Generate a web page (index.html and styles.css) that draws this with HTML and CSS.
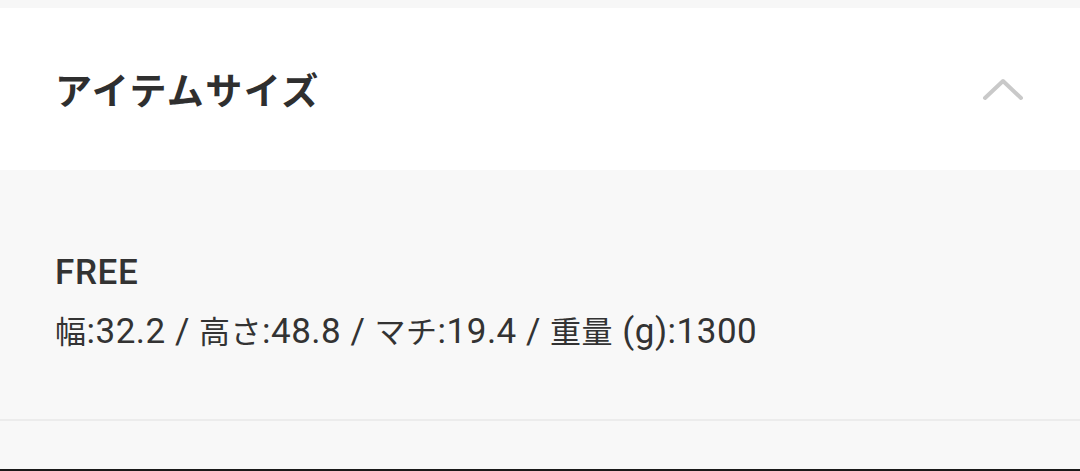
FILE: index.html
```html
<!DOCTYPE html>
<html lang="ja">
<head>
<meta charset="utf-8">
<link rel="stylesheet" href="styles.css">
</head>
<body>
<div class="top-strip"></div>
<section class="accordion">
  <header class="acc-head">
    <h2 class="acc-title">アイテムサイズ</h2>
    <svg class="chevron" width="42" height="24" viewBox="0 0 42 24">
      <polyline points="3,21 21,4 39,21" fill="none" stroke="#c9c9c9" stroke-width="4" stroke-linecap="round" stroke-linejoin="round"/>
    </svg>
  </header>
  <div class="acc-body">
    <div class="size-name">FREE</div>
    <div class="size-detail"><span class="ja">幅</span>:32.2 / <span class="ja">高さ</span>:48.8 / <span class="ja">マチ</span>:19.4 / <span class="ja">重量</span> (g):1300</div>
  </div>
  <div class="acc-after"></div>
  <div class="bottom-bar"></div>
</section>
</body>
</html>
```

FILE: styles.css
```css
html, body {
  margin: 0;
  padding: 0;
  background: #f8f8f8;
}
body {
  width: 1080px;
  height: 471px;
  overflow: hidden;
  font-family: Roboto, "Noto Sans CJK JP", sans-serif;
  color: #333333;
}
.top-strip {
  height: 8px;
  background: #f7f7f7;
}
.acc-head {
  height: 162px;
  background: #ffffff;
  display: flex;
  align-items: center;
  justify-content: space-between;
  padding: 0 55px 0 55px;
  box-sizing: border-box;
}
.acc-title {
  margin: 0;
  font-family: "Noto Sans CJK JP", sans-serif;
  font-size: 37px;
  font-weight: 700;
  color: #2f2f2f;
  letter-spacing: 1.5px;
}
.chevron {
  display: block;
  margin-right: 1px;
}
.acc-body {
  height: 251px;
  box-sizing: border-box;
  padding: 84px 55px 0 55px;
  background: #f8f8f8;
  border-bottom: 2px solid #ececec;
}
.size-name {
  font-size: 35px;
  font-weight: 500;
  line-height: 38px;
  letter-spacing: 0.6px;
  color: #333;
}
.size-detail {
  margin-top: 18px;
  font-size: 35px;
  line-height: 40px;
  letter-spacing: 0.5px;
  color: #333;
}
.ja {
  font-family: "Noto Sans CJK JP", sans-serif;
  font-size: 31px;
}
.acc-after {
  height: 48px;
  background: #f8f8f8;
}
.bottom-bar {
  height: 2px;
  background: #1a1a1a;
}
```
